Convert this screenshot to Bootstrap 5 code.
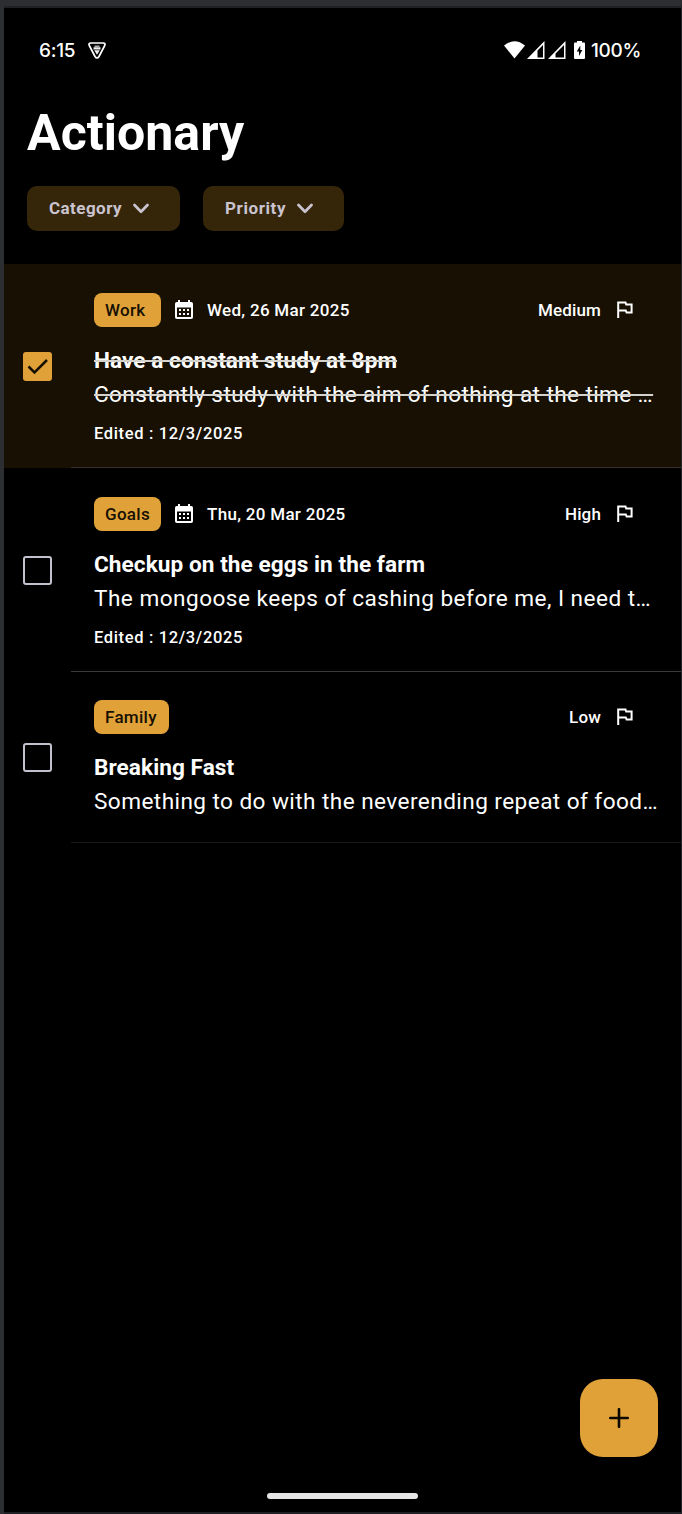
<!DOCTYPE html>
<html lang="en">
<head>
<meta charset="utf-8">
<meta name="viewport" content="width=device-width, initial-scale=1">
<title>Actionary</title>
<link href="https://cdn.jsdelivr.net/npm/bootstrap@5.3.0/dist/css/bootstrap.min.css" rel="stylesheet">
<style>
body{background:#000;color:#fff;font-family:Roboto,"Liberation Sans",sans-serif;font-size:17px;font-weight:500;line-height:23px}
svg{display:block;flex:none}
.phone{height:1514px;border:solid #2d2e32;border-width:6px 1px 0 4px;border-right-color:#242529;overflow:hidden}
.screen{border-top:2px solid #202125;border-bottom:2px solid #1f2024;background:#000}
.status{height:84px;padding:0 40px 0 35px;font-family:Inter,Roboto,sans-serif;font-size:19px;letter-spacing:-.3px}
.app-title{font-size:50px;font-weight:700;line-height:60px;height:60px;margin:11px 0 0 23px;letter-spacing:.05px}
.filters{margin:23px 0 0 23px;gap:23px}
.filter{height:45px;background:#35260a;color:#cac4d0;border-radius:10px;font-weight:700;font-size:17px;letter-spacing:.45px;padding:0 0 0 22px;gap:11px;border:0}
.filter.wide-text{letter-spacing:.6px}
.tasks{margin-top:33px}
.task{height:204px}
.task.short{height:171px}
.task.done{background:#171003}
.check-col{width:67px;padding-left:19px}
.box{width:29px;height:29px;border:2px solid #c4c1cc;border-radius:3px}
.box.on{border:0;background:#e0a238}
.body-col{border-bottom:1px solid #3a3a3d;padding:29px 0 0 23px;min-width:0}
.short .body-col{border-color:#18181a;padding-top:28px}
.done .body-col{border-color:#38302a}
.meta{height:34px;padding-right:48px;letter-spacing:.3px}
.tag{height:34px;width:67px;padding-left:11px;background:#e0a238;color:#171003;border-radius:8px}
.date{margin-left:14px;gap:14px}
.prio{gap:16px;letter-spacing:.15px}
.name,.desc{font-size:22.6px;line-height:34px;white-space:nowrap}
.name{font-weight:700;margin-top:17px;letter-spacing:.06px}
.desc{font-weight:400;letter-spacing:.43px}
.done .desc{letter-spacing:.39px}
.done .name,.done .desc{text-decoration:line-through;text-decoration-thickness:2px;text-decoration-color:#d4d2cd}
.edited{margin-top:10px;font-size:16.5px;letter-spacing:.65px}
.fab{width:78px;height:78px;border-radius:23px;background:#e0a238;border:0;margin:auto 23px 36px auto;padding:0}
.home{width:151px;height:6px;border-radius:3px;background:#e6e6e6;margin:0 auto 13px}
</style>
<script src="https://cdn.jsdelivr.net/npm/bootstrap@5.3.0/dist/js/bootstrap.bundle.min.js"></script>
</head>
<body>
<svg width="0" height="0" class="position-absolute">
<symbol id="flag" viewBox="0 0 16 18"><path d="M1.200 17V1.500H8.500L9.200 3.500H14.600V11.500H9.600L8.800 9.400H1.200" fill="none" stroke="#fff" stroke-width="2"/></symbol>
<symbol id="cal" viewBox="0 0 18 20"><path fill="#fff" fill-rule="evenodd" d="M3 0h2v2h8V0h2v2h1.200Q18 2 18 3.800V17.200Q18 19 16.200 19H1.800Q0 19 0 17.200V3.800Q0 2 1.800 2H3zM2 7.500V17H16V7.500z"/><path fill="#fff" d="M4 9h2v2H4zM8 9h2v2H8zM12 9h2v2h-2zM4 13h2v2H4zM8 13h2v2H8zM12 13h2v2h-2z"/></symbol>
<symbol id="chev" viewBox="0 0 16 11"><path d="M1.500 2 8 8.700 14.500 2" fill="none" stroke="#cac4d0" stroke-width="2.700" stroke-linecap="round" stroke-linejoin="round"/></symbol>
</svg>
<div class="phone d-flex flex-column">
<main class="screen d-flex flex-column flex-grow-1">
  <header class="status d-flex align-items-center">
    <span>6:15</span>
    <svg width="18" height="17" viewBox="0 0 18 17" style="margin-left:13px"><path d="M3 1H15Q18 1 16.500 4L11 14.500Q9 17.500 7 14.500L1.500 4Q0 1 3 1z" fill="none" stroke="#fff" stroke-width="1.700"/><path d="M6.500 3.500h5v1.500h-5z" fill="#aaa"/><path d="M5.500 5.300h7v2.200h-7zM6.200 8.200h5.600L9 12.800z" fill="#eee"/></svg>
    <div class="d-flex align-items-center ms-auto">
      <svg width="21" height="18" viewBox="0 0 21 18"><path d="M0 4.500Q10.500-4 21 4.500L10.500 17.500z" fill="#fff"/></svg>
      <svg width="18" height="18" viewBox="0 0 18 18" style="margin:0 3px 0 2px"><path fill="#fff" fill-rule="evenodd" d="M0 18 17.500 0V18zM10.500 9.500V16.500H16V4z"/></svg>
      <svg width="18" height="18" viewBox="0 0 18 18"><path fill="#fff" fill-rule="evenodd" d="M0 18 17.500 0V18zM7.500 12.500V16.500H16V4z"/></svg>
      <svg width="11" height="18" viewBox="0 0 11 18" style="margin:0 6px 0 8px"><path d="M3 0h5v1.500h2q1 0 1 1V17q0 1-1 1H1q-1 0-1-1V2.500q0-1 1-1H3z" fill="#fff"/><path d="M6.300 4.500 2.800 10.500H5v4.500l3.300-6H6.300z" fill="#000"/></svg>
      <span>100%</span>
    </div>
  </header>
  <h1 class="app-title">Actionary</h1>
  <div class="filters d-flex">
    <button class="filter d-flex align-items-center" style="width:153px">Category<svg width="16" height="11"><use href="#chev"/></svg></button>
    <button class="filter wide-text d-flex align-items-center" style="width:141px">Priority<svg width="16" height="11"><use href="#chev"/></svg></button>
  </div>
  <section class="tasks">
    <article class="task done d-flex">
      <div class="check-col d-flex align-items-center flex-shrink-0"><div class="box on"><svg width="29" height="29" viewBox="0 0 29 29"><path d="M5.500 14.500 11.500 20.500 24 8" fill="none" stroke="#171003" stroke-width="2.500"/></svg></div></div>
      <div class="body-col flex-grow-1">
        <div class="meta d-flex align-items-center"><span class="tag d-flex align-items-center">Work</span><span class="date d-flex align-items-center"><svg width="18" height="20"><use href="#cal"/></svg><span>Wed, 26 Mar 2025</span></span><span class="prio d-flex align-items-center ms-auto"><span>Medium</span><svg width="16" height="18"><use href="#flag"/></svg></span></div>
        <div class="name"><span>Have a constant study at 8pm</span></div>
        <div class="desc"><span>Constantly study with the aim of nothing at the time …</span></div>
        <div class="edited"><span>Edited : 12/3/2025</span></div>
      </div>
    </article>
    <article class="task d-flex">
      <div class="check-col d-flex align-items-center flex-shrink-0"><div class="box"></div></div>
      <div class="body-col flex-grow-1">
        <div class="meta d-flex align-items-center"><span class="tag d-flex align-items-center">Goals</span><span class="date d-flex align-items-center"><svg width="18" height="20"><use href="#cal"/></svg><span>Thu, 20 Mar 2025</span></span><span class="prio d-flex align-items-center ms-auto"><span>High</span><svg width="16" height="18"><use href="#flag"/></svg></span></div>
        <div class="name"><span>Checkup on the eggs in the farm</span></div>
        <div class="desc" style="letter-spacing:.47px"><span>The mongoose keeps of cashing before me, I need t…</span></div>
        <div class="edited"><span>Edited : 12/3/2025</span></div>
      </div>
    </article>
    <article class="task short d-flex">
      <div class="check-col d-flex align-items-center flex-shrink-0"><div class="box"></div></div>
      <div class="body-col flex-grow-1">
        <div class="meta d-flex align-items-center"><span class="tag d-flex align-items-center" style="width:75px">Family</span><span class="prio d-flex align-items-center ms-auto"><span>Low</span><svg width="16" height="18"><use href="#flag"/></svg></span></div>
        <div class="name"><span>Breaking Fast</span></div>
        <div class="desc"><span>Something to do with the neverending repeat of food…</span></div>
      </div>
    </article>
  </section>
  <button class="fab d-flex align-items-center justify-content-center" aria-label="Add task"><svg width="20" height="20" viewBox="0 0 20 20"><path d="M10 1.200V18.800M1.200 10H18.800" stroke="#0c0800" stroke-width="2.600" stroke-linecap="round"/></svg></button>
  <div class="home"></div>
</main>
</div>
</body>
</html>
